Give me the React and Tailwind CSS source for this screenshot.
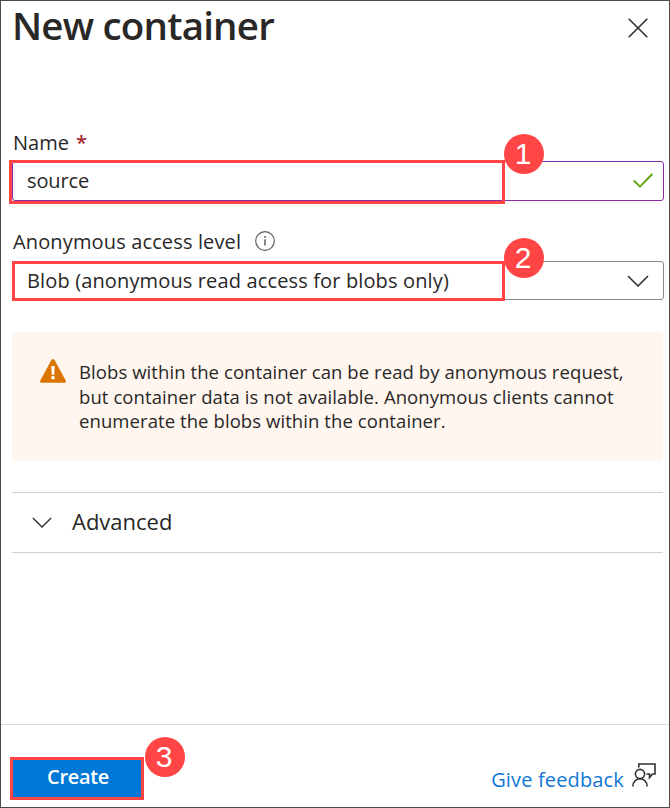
const Badge = ({ children, className }) => (
  <span
    className={`absolute flex size-10 items-center justify-center rounded-full bg-[#ff4545] pr-0.5 font-['Liberation_Sans',sans-serif] text-[30px] leading-none text-white ${className}`}
  >
    {children}
  </span>
);

const Highlight = ({ className }) => (
  <span className={`pointer-events-none absolute border-3 border-[#ff4545] ${className}`} />
);

const Chevron = ({ className, strokeWidth }) => (
  <svg viewBox="0 0 22 12" className={className} fill="none" stroke="#323130" strokeWidth={strokeWidth}>
    <path d="M1 1 L11 11 L21 1" />
  </svg>
);

export default function App() {
  return (
    <div className="flex h-[808px] w-[670px] flex-col overflow-hidden border border-[#4f4a4c] bg-white font-['Open_Sans','Noto_Sans',sans-serif] text-[#292827]">
      <header className="flex h-[119px] items-start justify-between pl-[11px] pr-[21px]">
        <h1 className="h-[50px] whitespace-nowrap text-[38.5px] font-semibold leading-[49px] tracking-[-0.8px]">New container</h1>
        <button aria-label="Close" className="mt-[17px]">
          <svg viewBox="0 0 20 20" className="size-5" fill="none" stroke="#323130" strokeWidth="1.6">
            <path d="M0.7 0.7 L19.3 19.3 M19.3 0.7 L0.7 19.3" />
          </svg>
        </button>
      </header>

      <main className="flex flex-1 flex-col pl-[11px] pr-[5px]">
        <label className="mt-2 flex h-8 gap-[7px] text-[20px] leading-[30px]">
          <span className="pl-px">Name</span>
          <span className="font-semibold text-[#a4262c]">*</span>
        </label>
        <div className="relative mt-px flex h-10 items-center justify-between rounded-[3px] border border-[#8a2da5] pl-[14px] pr-[10px]">
          <span className="text-[20px] leading-[30px] tracking-[-0.1px]">source</span>
          <svg viewBox="0 0 20 15" className="mb-0.5 h-[15px] w-5" fill="none" stroke="#57a300" strokeWidth="1.8">
            <path d="M0.7 7.5 L7 13.6 L19.3 1" />
          </svg>
          <Highlight className="-left-1 -top-0.5 h-11 w-[496px]" />
          <Badge className="left-[491px] top-[-28px]">1</Badge>
        </div>

        <div className="mt-[26px] flex h-[34px] items-start gap-[14px]">
          <span className="whitespace-nowrap pl-px text-[20px] leading-[30px] tracking-[0.14px]">Anonymous access level</span>
          <svg viewBox="0 0 20 20" className="mt-1 size-5" fill="none" stroke="#605e5c" strokeWidth="1.2">
            <circle cx="10" cy="10" r="9.3" />
            <path d="M10 8.2 V14.6" strokeWidth="1.5" />
            <path d="M10 5 V6.8" strokeWidth="1.6" />
          </svg>
        </div>
        <div className="relative flex h-[39px] items-center justify-between rounded-[3px] border border-[#8a8886] pl-[14px] pr-[14px]">
          <span className="whitespace-nowrap text-[20px] leading-[30px] tracking-[0.14px]">Blob (anonymous read access for blobs only)</span>
          <Chevron className="h-3 w-[22px]" strokeWidth="1.6" />
          <Highlight className="-left-px -top-px h-10 w-[493px]" />
          <Badge className="left-[491px] top-[-24px]">2</Badge>
        </div>

        <section className="mr-px mt-8 flex h-[129px] rounded-[3px] bg-[#fff6f0] pl-7 pt-[27px]">
          <svg viewBox="0 0 26 24" className="h-6 w-[26px] shrink-0">
            <path d="M11.3 1.3 Q13 -1.2 14.7 1.3 L25.6 21.3 Q26.5 23.7 24.3 23.8 H1.7 Q-0.5 23.7 0.4 21.3 Z" fill="#db7500" />
            <path d="M11.3 7 H14.7 L14.3 15.8 H11.7 Z" fill="#fff" />
            <path d="M11.4 17.2 H14.6 V20.2 H11.4 Z" fill="#fff" />
          </svg>
          <p className="ml-[13px] mt-px whitespace-nowrap text-[18.5px] leading-[24.6px] tracking-[0.08px]">
            Blobs within the container can be read by anonymous request,<br />
            but container data is not available. Anonymous clients cannot<br />
            enumerate the blobs within the container.
          </p>
        </section>

        <button className="mr-px mt-[31px] flex h-[61px] items-center gap-5 border-y border-[#d2d0ce] pl-5 text-left">
          <Chevron className="h-[11px] w-5" strokeWidth="1.5" />
          <span className="pb-[3px] text-[22px] leading-[30px]">Advanced</span>
        </button>
      </main>

      <footer className="flex h-[83px] shrink-0 items-start justify-between border-t border-[#dddbda] pl-[9px] pr-[13px]">
        <div className="relative mt-8">
          <button className="flex h-[43px] w-[134px] items-center justify-center border-3 border-[#ff4545] bg-[#0078d7] pb-1 pl-0.5 text-[20px] font-semibold leading-[30px] tracking-[-0.35px] text-white">
            Create
          </button>
          <Badge className="left-[135px] top-[-20px]">3</Badge>
        </div>
        <a className="mt-[38px] flex items-start gap-2 text-[#0f78d4]">
          <span className="mt-px whitespace-nowrap text-[20px] leading-[32px] tracking-[0.15px]">Give feedback</span>
          <svg viewBox="0 0 24 24" className="size-6" fill="none" stroke="#323130" strokeWidth="1.6">
            <path d="M6.8 4.5 V1 H23 V11 H20.5 L17.5 14.5 V11 H14.5" />
            <circle cx="8" cy="11" r="4.6" />
            <path d="M0.8 23.5 C1 13.2 15 13.2 15.2 23.5" />
          </svg>
        </a>
      </footer>
    </div>
  );
}
